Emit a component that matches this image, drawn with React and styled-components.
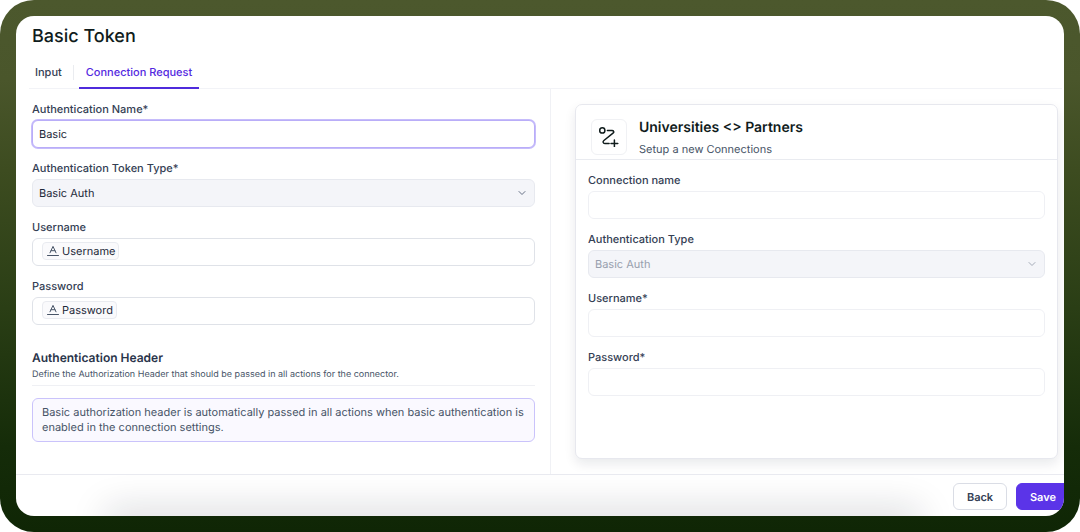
import { useState } from "react";
import styled, { createGlobalStyle } from "styled-components";
import { ChevronDown } from "lucide-react";

const GlobalStyle = createGlobalStyle`
  * {
    box-sizing: border-box;
  }
  body {
    margin: 0;
    background: #fff;
    color: #344054;
    font-family: Inter, "Liberation Sans", sans-serif;
    font-size: 11px;
    line-height: 16px;
    text-rendering: geometricPrecision;
  }
  h1, h2, p {
    margin: 0;
  }
  button, input, select {
    font: inherit;
    color: inherit;
    text-rendering: inherit;
  }
`;

function TextTypeIcon() {
  return (
    <svg width="12" height="12" viewBox="0 0 12 12" fill="none" stroke="#475467" strokeLinecap="round" strokeLinejoin="round" aria-hidden="true">
      <path d="M3 7.8 6 1.4l3 6.4M4.1 5.7h3.8" />
      <path d="M.5 10.5h11" />
    </svg>
  );
}

function ConnectionIcon() {
  return (
    <svg width="20" height="20" viewBox="0 0 20 20" fill="none" stroke="#101c1c" strokeWidth="1.5" strokeLinecap="round" strokeLinejoin="round" aria-hidden="true">
      <circle cx="3.3" cy="3.4" r="2.6" />
      <path d="M8.4 3.5H13c1.8 0 2.4 1.6 1 2.7L4.9 13.5c-1.4 1.1-.9 2.9.9 2.9h4.3" />
      <path d="M15.4 13v6.8M12 16.4h6.8" />
    </svg>
  );
}

function SelectField({ id, label, value, disabled }) {
  return (
    <Field>
      <Label htmlFor={id}>{label}</Label>
      <SelectWrap $disabled={disabled}>
        <Select id={id} defaultValue={value} disabled={disabled}>
          <option>{value}</option>
        </Select>
        <ChevronDown size={12} strokeWidth={2} />
      </SelectWrap>
    </Field>
  );
}

function TokenField({ id, label, token }) {
  return (
    <Field>
      <Label htmlFor={id}>{label}</Label>
      <TokenBox>
        <Token>
          <TextTypeIcon />
          {token}
        </Token>
        <TokenInput id={id} type="text" />
      </TokenBox>
    </Field>
  );
}

function App() {
  const [name, setName] = useState("Basic");

  return (
    <Frame>
      <GlobalStyle />
      <Panel>
        <Title>Basic Token</Title>
        <Tabs>
          <Tab type="button">Input</Tab>
          <TabDivider />
          <Tab type="button" $active>Connection Request</Tab>
        </Tabs>

        <Columns>
          <FormColumn>
            <Fields>
              <Field>
                <Label htmlFor="auth-name">Authentication Name*</Label>
                <Input id="auth-name" $focused value={name} onChange={(e) => setName(e.target.value)} />
              </Field>
              <SelectField id="token-type" label="Authentication Token Type*" value="Basic Auth" />
              <TokenField id="username" label="Username" token="Username" />
              <TokenField id="password" label="Password" token="Password" />
            </Fields>

            <SectionHeader>
              <SectionTitle>Authentication Header</SectionTitle>
              <SectionText>Define the Authorization Header that should be passed in all actions for the connector.</SectionText>
            </SectionHeader>
            <Notice>
              Basic authorization header is automatically passed in all actions when basic authentication is enabled in the connection settings.
            </Notice>
          </FormColumn>

          <PreviewColumn>
            <Card>
              <CardHeader>
                <IconBox><ConnectionIcon /></IconBox>
                <div>
                  <CardTitle>Universities &lt;&gt; Partners</CardTitle>
                  <CardText>Setup a new Connections</CardText>
                </div>
              </CardHeader>
              <CardBody>
                <Field>
                  <Label htmlFor="connection-name">Connection name</Label>
                  <Input id="connection-name" $light />
                </Field>
                <SelectField id="auth-type" label="Authentication Type" value="Basic Auth" disabled />
                <Field>
                  <Label htmlFor="preview-username">Username*</Label>
                  <Input id="preview-username" $light />
                </Field>
                <Field>
                  <Label htmlFor="preview-password">Password*</Label>
                  <Input id="preview-password" type="password" $light />
                </Field>
              </CardBody>
            </Card>
          </PreviewColumn>
        </Columns>

        <Footer>
          <Button type="button">Back</Button>
          <Button type="submit" $primary>Save</Button>
        </Footer>
      </Panel>
    </Frame>
  );
}

const Frame = styled.div`
  display: flex;
  min-height: 100vh;
  padding: 16px;
  border-radius: 34px;
  background: linear-gradient(#4c582d 0%, #4a562b 15%, #3d4c20 32%, #2a3e15 58%, #152c09 84%, #0f2605 100%);
`;

const Panel = styled.main`
  flex: 1;
  min-width: 0;
  display: flex;
  flex-direction: column;
  overflow: hidden;
  border-radius: 18px;
  background: #fff;
`;

const Title = styled.h1`
  padding: 9px 16px 0;
  color: #101c1c;
  font-size: 18px;
  line-height: 24px;
  font-weight: 500;
`;

const Tabs = styled.nav`
  display: flex;
  align-items: center;
  height: 32px;
  margin: 8px 2px 0 13px;
  border-bottom: 1px solid #f2f3f7;
`;

const Tab = styled.button`
  height: 32px;
  padding: 0 7px;
  border: 0;
  border-bottom: 2px solid ${(p) => (p.$active ? "#4f2bdc" : "transparent")};
  background: none;
  color: ${(p) => (p.$active ? "#5328e0" : "#344054")};
  font-weight: 500;

  &:first-child {
    padding-left: 6px;
    padding-right: 11px;
  }
`;

const TabDivider = styled.span`
  width: 1px;
  height: 15px;
  margin-right: 5px;
  background: #eaecf0;
`;

const Columns = styled.div`
  flex: 1;
  display: grid;
  grid-template-columns: 535fr 513fr;
`;

const FormColumn = styled.section`
  padding: 12px 15px 30px 16px;
  border-right: 1px solid #f0f1f5;
`;

const PreviewColumn = styled.section`
  display: flex;
  padding: 15px 6px 15px 24px;
`;

const Fields = styled.div`
  display: flex;
  flex-direction: column;
  gap: 12px;
`;

const Field = styled.div`
  display: flex;
  flex-direction: column;
  gap: 3px;
`;

const Label = styled.label`
  font-weight: 500;
`;

const Input = styled.input`
  width: 100%;
  height: 28px;
  padding: 0 6px;
  border: 1px solid ${(p) => (p.$focused ? "#b9adf8" : p.$light ? "#eff0f4" : "#dfe2e8")};
  border-radius: 6px;
  outline: none;
  background: #fff;
  color: #1d2939;
  box-shadow: ${(p) => (p.$focused ? "0 0 0 1px #c6bcfb" : "none")};
`;

const SelectWrap = styled.div`
  display: flex;
  align-items: center;
  height: 28px;
  padding-right: 6px;
  border: 1px solid #e7e9ef;
  border-radius: 6px;
  background: #f4f5f9;
  color: ${(p) => (p.$disabled ? "#98a0ae" : "#1d2939")};

  svg {
    flex: none;
    color: ${(p) => (p.$disabled ? "#a4abb8" : "#667085")};
  }
`;

const Select = styled.select`
  flex: 1;
  height: 100%;
  padding: 0 6px;
  border: 0;
  outline: none;
  appearance: none;
  background: none;
  opacity: 1;
`;

const TokenBox = styled.div`
  display: flex;
  align-items: flex-start;
  height: 28px;
  padding: 3px 9px;
  border: 1px solid #dfe2e8;
  border-radius: 6px;
`;

const Token = styled.span`
  display: flex;
  align-items: center;
  gap: 3px;
  height: 18px;
  padding: 0 3px 0 4px;
  border: 1px solid #e9ebf0;
  border-radius: 4px;
  background: #fafafc;
  color: #1d2939;
`;

const TokenInput = styled.input`
  flex: 1;
  min-width: 0;
  height: 18px;
  border: 0;
  outline: none;
  background: none;
`;

const SectionHeader = styled.header`
  margin-top: 24px;
  padding-bottom: 3px;
  border-bottom: 1px solid #eff0f4;
`;

const SectionTitle = styled.h2`
  color: #29344a;
  font-size: 12px;
  line-height: 18px;
  font-weight: 600;
`;

const SectionText = styled.p`
  color: #475467;
  font-size: 9px;
  line-height: 15px;
`;

const Notice = styled.p`
  margin-top: 12px;
  padding: 6px 9px;
  border: 1px solid #cac3fb;
  border-radius: 6px;
  background: #faf9ff;
  color: #475467;
  line-height: 15px;
`;

const Card = styled.div`
  flex: 1;
  border: 1px solid #e7e8ee;
  border-radius: 7px;
  background: #fff;
  box-shadow: 0 5px 12px rgba(16, 24, 40, 0.09);
`;

const CardHeader = styled.header`
  display: flex;
  align-items: center;
  gap: 12px;
  height: 55px;
  padding: 9px 15px 0;
  border-bottom: 1px solid #e9ebf0;
`;

const IconBox = styled.div`
  display: flex;
  align-items: center;
  justify-content: center;
  width: 36px;
  height: 36px;
  border: 1px solid #f0f1f4;
  border-radius: 6px;
`;

const CardTitle = styled.h2`
  color: #101c1c;
  font-size: 14px;
  line-height: 24px;
  font-weight: 600;
`;

const CardText = styled.p`
  color: #475467;
  line-height: 18px;
`;

const CardBody = styled.div`
  display: flex;
  flex-direction: column;
  gap: 12px;
  padding: 12px;
`;

const Footer = styled.footer`
  position: relative;
  display: flex;
  justify-content: flex-end;
  gap: 9px;
  height: 42px;
  padding-top: 8px;
  margin-right: -6px;
  border-top: 1px solid #e9eaf0;

  /* soft shadow that rises from the bottom edge */
  &::after {
    content: "";
    position: absolute;
    left: 96px;
    right: 156px;
    bottom: -12px;
    height: 12px;
    box-shadow: 0 0 36px 6px rgba(16, 24, 40, 0.18);
  }
`;

const Button = styled.button`
  position: relative;
  z-index: 1;
  width: 54px;
  height: 27px;
  padding: 0;
  border: 1px solid ${(p) => (p.$primary ? "#5b34e8" : "#dadde5")};
  border-radius: 6px;
  background: ${(p) => (p.$primary ? "#5b34e8" : "#fff")};
  color: ${(p) => (p.$primary ? "#fff" : "#344054")};
  font-weight: 600;
`;

export default App;
